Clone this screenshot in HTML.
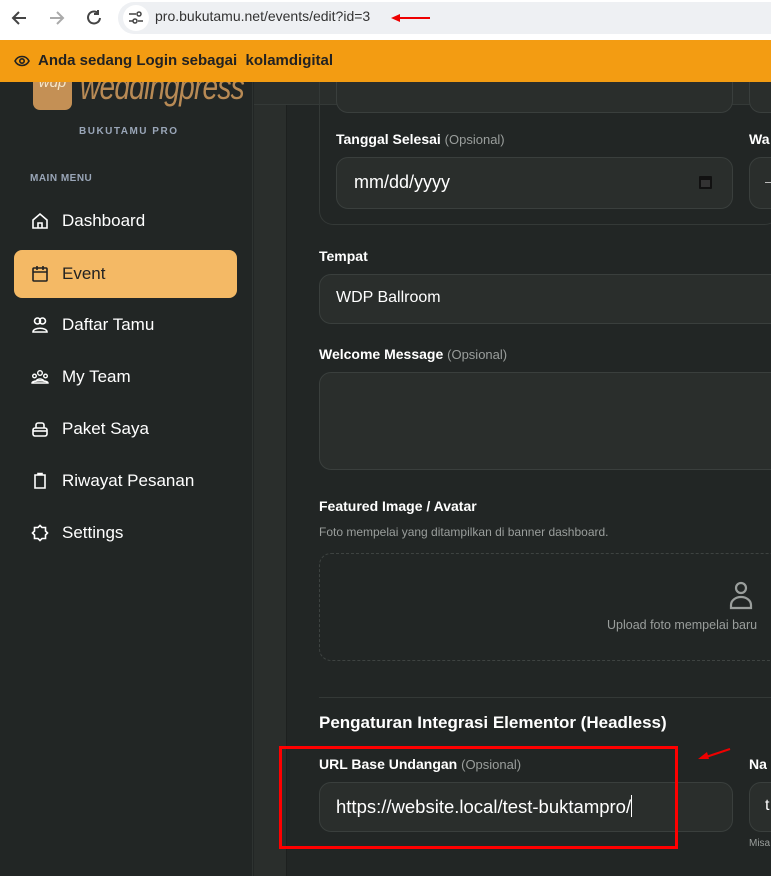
<!DOCTYPE html>
<html><head><meta charset="utf-8"><style>
*{box-sizing:border-box;margin:0;padding:0}
body{width:771px;height:876px;overflow:hidden;background:#222625;font-family:"Liberation Sans",sans-serif;position:relative;color:#fff}
.abs{position:absolute}
.lbl{font-weight:bold;font-size:14px;color:#fff}
.lbl span{font-weight:normal;color:#9a9e9c;font-size:13px}
.inp{position:absolute;border:1px solid #3a3f3d;background:#2a2e2c;border-radius:12px}
.nav{position:absolute;left:14px;width:223px;height:48px;border-radius:8px;font-size:17px;color:#fff;display:flex;align-items:center;padding-left:48px}
.nav svg{position:absolute;left:17px;top:15px}
</style></head><body>
<!-- sidebar -->
<div class="abs" style="left:0;top:82px;width:253px;height:794px;background:#222625;border-right:1px solid #2e3331"></div>
<div class="abs" style="left:33px;top:70px;width:39px;height:40px;background:#c49055;border-radius:7px;font-style:italic;font-size:15px;color:#f5e6c8;text-align:center;line-height:26px">wdp</div>
<div class="abs" style="left:80px;top:66px;width:160px;font-size:36px;font-style:italic;color:#b88a55;white-space:nowrap;transform:scaleX(0.78);transform-origin:0 0;letter-spacing:-1px">weddingpress</div>
<!-- browser bar -->
<div class="abs" style="left:0;top:0;width:771px;height:40px;background:#fff"></div>
<svg class="abs" style="left:10px;top:8px" width="100" height="20" viewBox="0 0 100 20" fill="none" stroke-width="2">
<path d="M16 10H3M9 4L3 10l6 6" stroke="#444"/>
<path d="M40 10h13M47 4l6 6-6 6" stroke="#aaa"/>
<path d="M88 5a6 6 0 1 0 2 5M88 2v4h-4" stroke="#444"/>
</svg>
<div class="abs" style="left:118px;top:2px;width:680px;height:32px;border-radius:16px;background:#eef0f3"></div>
<div class="abs" style="left:123px;top:5px;width:26px;height:26px;border-radius:13px;background:#fff"></div>
<svg class="abs" style="left:127px;top:9px" width="18" height="18" viewBox="0 0 18 18" fill="none" stroke="#444" stroke-width="1.5"><path d="M2 5h7M2 12h4M11 12h5"/><circle cx="12" cy="5" r="2"/><circle cx="8" cy="12" r="2"/></svg>
<div class="abs" style="left:155px;top:8px;font-size:14px;color:#333">pro.bukutamu.net/events/edit?id=3</div>
<svg class="abs" style="left:390px;top:12px" width="42" height="12"><path d="M40 6H8" stroke="#e00" stroke-width="2"/><path d="M1 6l9-4v8z" fill="#e00"/></svg>
<!-- orange bar -->
<div class="abs" style="left:0;top:40px;width:771px;height:42px;background:#f39c12"></div>
<svg class="abs" style="left:14px;top:54px" width="16" height="14" viewBox="0 0 16 14" fill="none" stroke="#222" stroke-width="1.6"><path d="M1 7c3-6 11-6 14 0-3 6-11 6-14 0z"/><circle cx="8" cy="7" r="2.2"/></svg>
<div class="abs" style="left:38px;top:52px;font-size:15px;font-weight:bold;color:#222">Anda sedang Login sebagai&nbsp; kolamdigital</div>

<div class="abs" style="left:79px;top:126px;font-size:10px;font-weight:bold;letter-spacing:1.5px;color:#9aa6b8">BUKUTAMU PRO</div>
<div class="abs" style="left:30px;top:173px;font-size:10px;font-weight:bold;letter-spacing:0.5px;color:#9aa6b8">MAIN MENU</div>
<div class="nav" style="top:197px"><svg width="18" height="18" viewBox="0 0 18 18" fill="none" stroke="#fff" stroke-width="1.6"><path d="M2 8l7-6 7 6v8H2z M7 16v-5h4v5"/></svg>Dashboard</div>
<div class="nav" style="top:250px;background:#f4b965;color:#222"><svg width="18" height="18" viewBox="0 0 18 18" fill="none" stroke="#222" stroke-width="1.6"><rect x="2" y="3" width="14" height="13" rx="1"/><path d="M2 7h14M6 1v4M12 1v4"/></svg>Event</div>
<div class="nav" style="top:301px"><svg width="18" height="18" viewBox="0 0 18 18" fill="none" stroke="#fff" stroke-width="1.6"><circle cx="6.5" cy="5" r="3"/><circle cx="11.5" cy="5" r="3"/><path d="M2 16c0-5 14-5 14 0z"/></svg>Daftar Tamu</div>
<div class="nav" style="top:353px"><svg width="18" height="18" viewBox="0 0 18 18" fill="none" stroke="#fff" stroke-width="1.4"><circle cx="9" cy="5" r="2.3"/><circle cx="3.5" cy="8" r="1.8"/><circle cx="14.5" cy="8" r="1.8"/><path d="M1 15c0-3 16-3 16 0zM5 14c0-4 8-4 8 0"/></svg>My Team</div>
<div class="nav" style="top:405px"><svg width="18" height="18" viewBox="0 0 18 18" fill="none" stroke="#fff" stroke-width="1.6"><path d="M5 8V5a2 2 0 0 1 2-2h4a2 2 0 0 1 2 2v3"/><rect x="2" y="8" width="14" height="8" rx="2"/><path d="M2 11h14"/></svg>Paket Saya</div>
<div class="nav" style="top:457px"><svg width="18" height="18" viewBox="0 0 18 18" fill="none" stroke="#fff" stroke-width="1.6"><path d="M4 3h10v13H4zM7 3V1.5h4V3"/></svg>Riwayat Pesanan</div>
<div class="nav" style="top:509px"><svg width="18" height="18" viewBox="0 0 18 18" fill="none" stroke="#fff" stroke-width="1.6"><path d="M9 1.5l2 2h3.5v3.5l2 2-2 2v3.5H11l-2 2-2-2H3.5V11l-2-2 2-2V3.5H7z"/></svg>Settings</div>
<!-- main -->
<div class="abs" style="left:254px;top:82px;width:33px;height:794px;background:#2a2e2c;border-right:1px solid #1d201f"></div>
<div class="abs" style="left:254px;top:82px;width:517px;height:23px;background:#2a2e2c;border-bottom:1px solid #343937"></div>
<div class="abs" style="left:319px;top:82px;width:460px;height:143px;border:1px solid #343937;border-top:none;border-radius:0 0 14px 14px"></div>
<div class="inp" style="left:336px;top:82px;width:397px;height:31px;border-top:none;border-radius:0 0 12px 12px"></div>
<div class="inp" style="left:749px;top:82px;width:40px;height:31px;border-top:none;border-radius:0 0 12px 12px"></div>
<div class="abs lbl" style="left:336px;top:131px">Tanggal Selesai <span>(Opsional)</span></div>
<div class="abs lbl" style="left:749px;top:131px">Wa</div>
<div class="inp" style="left:336px;top:157px;width:397px;height:52px"></div>
<div class="abs" style="left:354px;top:172px;font-size:18px;color:#fff">mm/dd/yyyy</div>
<div class="abs" style="left:699px;top:176px;width:13px;height:13px;border:2px solid #111;border-top-width:4px;border-radius:1px;background:#333"></div>
<div class="inp" style="left:749px;top:157px;width:40px;height:52px"></div>
<div class="abs" style="left:765px;top:182px;width:8px;height:1px;background:#bbb"></div>
<div class="abs lbl" style="left:319px;top:248px">Tempat</div>
<div class="inp" style="left:319px;top:274px;width:470px;height:50px"></div>
<div class="abs" style="left:336px;top:289px;font-size:16px">WDP Ballroom</div>
<div class="abs lbl" style="left:319px;top:346px">Welcome Message <span>(Opsional)</span></div>
<div class="inp" style="left:319px;top:372px;width:470px;height:98px"></div>
<div class="abs lbl" style="left:319px;top:498px">Featured Image / Avatar</div>
<div class="abs" style="left:319px;top:525px;font-size:12px;color:#9a9e9c">Foto mempelai yang ditampilkan di banner dashboard.</div>
<div class="abs" style="left:319px;top:553px;width:470px;height:108px;border:1.5px dashed #3e4341;border-radius:12px"></div>
<svg class="abs" style="left:729px;top:580px" width="24" height="30" viewBox="0 0 24 30" fill="none" stroke="#9a9e9c" stroke-width="2.2"><circle cx="12" cy="8" r="5"/><path d="M2 28v-3a10 8 0 0 1 20 0v3z"/></svg>
<div class="abs" style="left:607px;top:618px;font-size:12.5px;color:#9a9e9c;white-space:nowrap">Upload foto mempelai baru</div>
<div class="abs" style="left:319px;top:697px;width:452px;height:1px;background:#343937"></div>
<div class="abs" style="left:319px;top:713px;font-size:17px;font-weight:bold">Pengaturan Integrasi Elementor (Headless)</div>
<div class="abs lbl" style="left:319px;top:756px">URL Base Undangan <span>(Opsional)</span></div>
<div class="abs lbl" style="left:749px;top:756px">Na</div>
<div class="inp" style="left:319px;top:782px;width:414px;height:50px"></div>
<div class="abs" style="left:336px;top:795px;font-size:18.5px;white-space:nowrap">https://website.local/test-buktampro/<span style="display:inline-block;width:1px;height:22px;background:#fff;vertical-align:-4px"></span></div>
<div class="inp" style="left:749px;top:782px;width:40px;height:50px"></div>
<div class="abs" style="left:765px;top:797px;font-size:16px">t</div>
<div class="abs" style="left:749px;top:838px;font-size:10px;color:#9a9e9c">Misa</div>
<div class="abs" style="left:279px;top:746px;width:399px;height:103px;border:3px solid #f00"></div>
<svg class="abs" style="left:696px;top:746px" width="36" height="16"><path d="M34 3L10 11" stroke="#e00" stroke-width="2"/><path d="M2 13l9-7 2 7z" fill="#e00"/></svg>
</body></html>
